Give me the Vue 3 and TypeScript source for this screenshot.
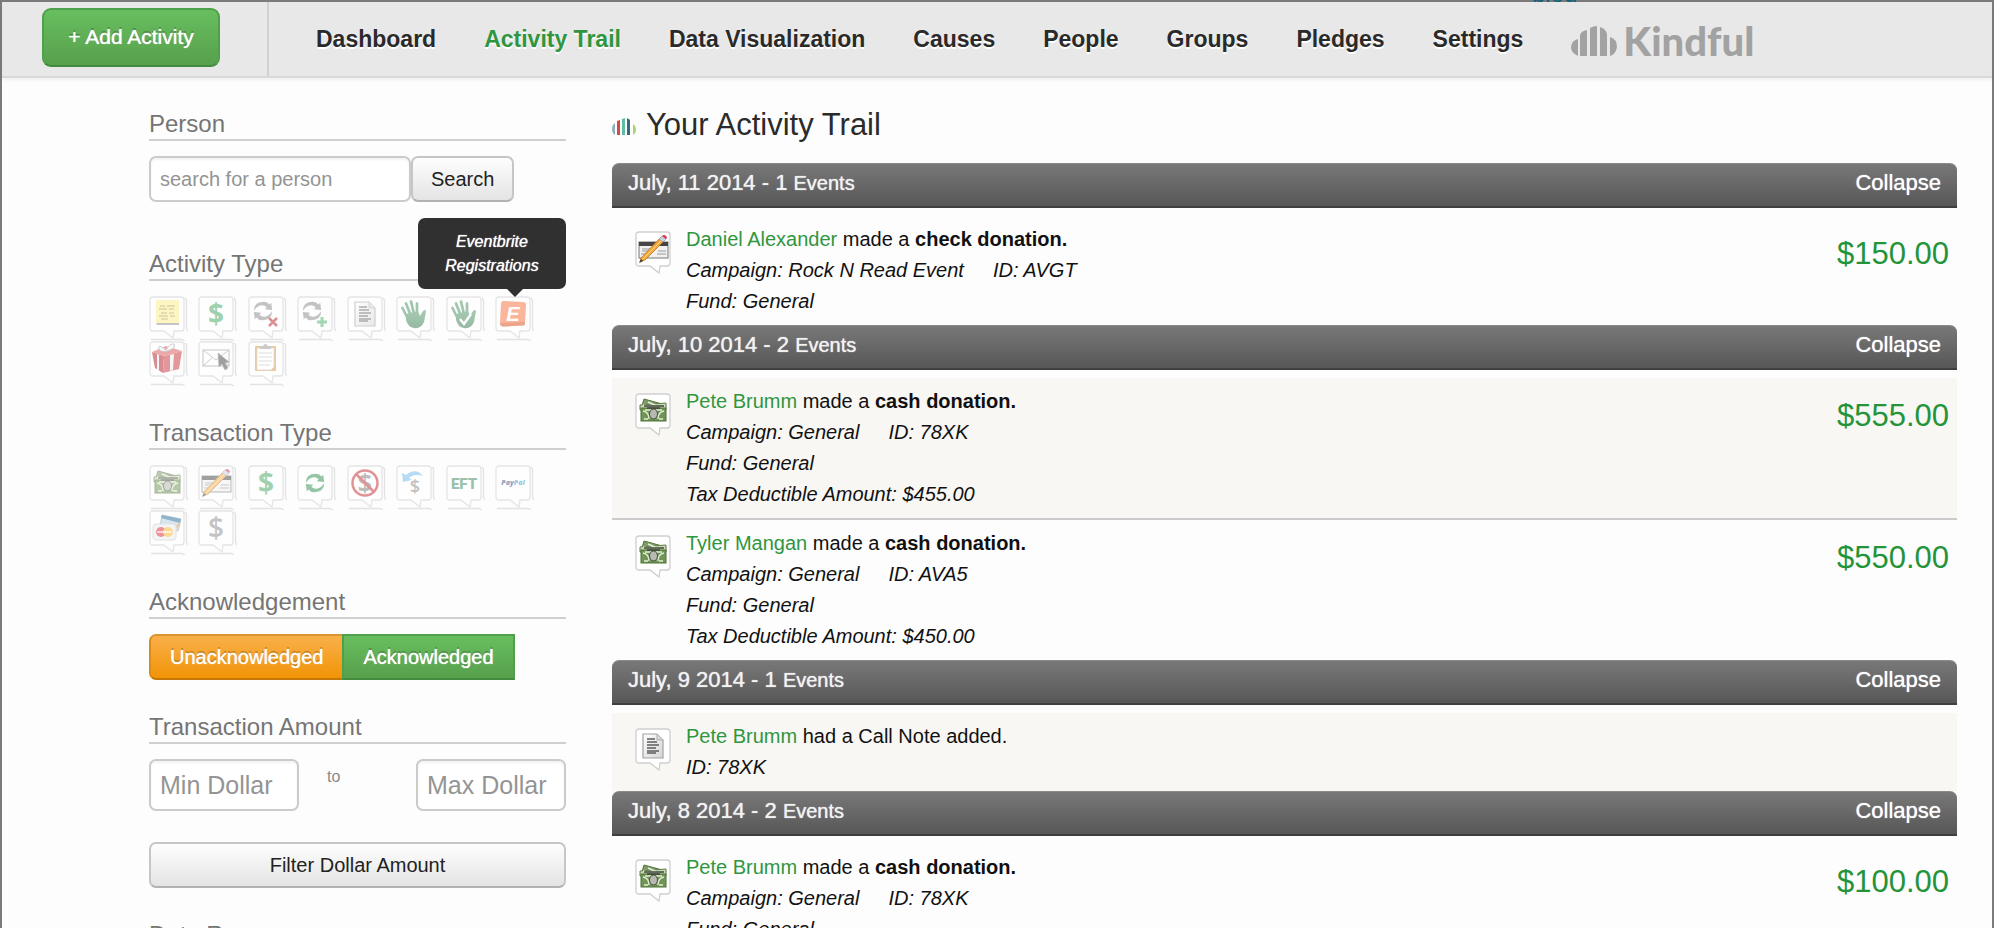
<script setup lang="ts">
import { ref } from 'vue'

interface TrailEvent {
  icon: string
  person: string
  verb: string
  what?: string
  campaign?: string
  id: string
  details: string[]
  amount?: string
  shaded: boolean
}
interface Day {
  date: string
  count: number
  events: TrailEvent[]
}

const nav = ['Dashboard', 'Activity Trail', 'Data Visualization', 'Causes', 'People', 'Groups', 'Pledges', 'Settings']
const active = ref('Activity Trail')

const activityTypes = [
  { icon: 'note', label: 'Notes' },
  { icon: 'dollar', label: 'Donations' },
  { icon: 'recur-stop', label: 'Recurring Stopped' },
  { icon: 'recur-add', label: 'Recurring Added' },
  { icon: 'doc', label: 'Call Notes' },
  { icon: 'hand', label: 'Volunteers' },
  { icon: 'hand-check', label: 'Volunteer Hours' },
  { icon: 'eventbrite', label: 'Eventbrite Registrations' },
  { icon: 'gift', label: 'Gifts' },
  { icon: 'mail', label: 'Email Clicks' },
  { icon: 'clipboard', label: 'Tasks' },
]
const transactionTypes = [
  { icon: 'cash', label: 'Cash' },
  { icon: 'check', label: 'Check' },
  { icon: 'dollar', label: 'Donation' },
  { icon: 'recur', label: 'Recurring' },
  { icon: 'no-dollar', label: 'Failed' },
  { icon: 'refund', label: 'Refund' },
  { icon: 'eft', label: 'EFT' },
  { icon: 'paypal', label: 'PayPal' },
  { icon: 'cards', label: 'Credit Card' },
  { icon: 'dollar-gray', label: 'Other' },
]

const days: Day[] = [
  {
    date: 'July, 11 2014',
    count: 1,
    events: [
      { icon: 'check', person: 'Daniel Alexander', verb: 'made a', what: 'check donation.', campaign: 'Rock N Read Event', id: 'AVGT', details: ['Fund: General'], amount: '$150.00', shaded: false },
    ],
  },
  {
    date: 'July, 10 2014',
    count: 2,
    events: [
      { icon: 'cash', person: 'Pete Brumm', verb: 'made a', what: 'cash donation.', campaign: 'General', id: '78XK', details: ['Fund: General', 'Tax Deductible Amount: $455.00'], amount: '$555.00', shaded: true },
      { icon: 'cash', person: 'Tyler Mangan', verb: 'made a', what: 'cash donation.', campaign: 'General', id: 'AVA5', details: ['Fund: General', 'Tax Deductible Amount: $450.00'], amount: '$550.00', shaded: false },
    ],
  },
  {
    date: 'July, 9 2014',
    count: 1,
    events: [
      { icon: 'doc', person: 'Pete Brumm', verb: 'had a Call Note added.', id: '78XK', details: [], shaded: true },
    ],
  },
  {
    date: 'July, 8 2014',
    count: 2,
    events: [
      { icon: 'cash', person: 'Pete Brumm', verb: 'made a', what: 'cash donation.', campaign: 'General', id: '78XK', details: ['Fund: General'], amount: '$100.00', shaded: false },
    ],
  },
]

const closed = ref<string[]>([])
function toggle(date: string) {
  closed.value = closed.value.includes(date) ? closed.value.filter((d) => d !== date) : [...closed.value, date]
}
</script>

<template>
  <div class="page">
    <svg class="defs" aria-hidden="true">
      <defs>
        <linearGradient id="g-hand" x1="0" y1="0" x2="0" y2="1">
          <stop offset="0" stop-color="#4f9a68" /><stop offset="1" stop-color="#33744a" />
        </linearGradient>
        <linearGradient id="g-page" x1="0" y1="0" x2="1" y2="1">
          <stop offset="0" stop-color="#ffffff" /><stop offset="1" stop-color="#d5d5d5" />
        </linearGradient>
        <symbol id="bubble" viewBox="0 0 39 45">
          <path d="M4 1H32Q35 1 35 4V32Q35 35 32 35H25L24 42L15 35H4Q1 35 1 32V4Q1 1 4 1Z" fill="#fff" stroke="#cfcfcf" stroke-width="1.3" />
        </symbol>
        <symbol id="sprite-edge" viewBox="0 0 39 45">
          <path d="M36 2L37.500 4V32L38.500 35M2 43.500H33L36 45" fill="none" stroke="#cacaca" stroke-width="1.300" />
        </symbol>
        <symbol id="note" viewBox="0 0 39 45">
          <path d="M7 27L30 27V29H8Z" fill="#8d8d8d" />
          <rect x="7" y="4" width="23" height="23" fill="#fdf08a" />
          <path d="M11 10h5M18 10h8M10 13h8M20 13h5M12 17h6M20 17h5M10 20h9M21 20h5M12 23h7" stroke="#c0ae5c" stroke-width="1.300" />
        </symbol>
        <symbol id="dollar" viewBox="0 0 39 45">
          <text x="18" y="28" text-anchor="middle" font-family="Open Sans, sans-serif" font-size="28" font-weight="700" fill="#45a764">$</text>
        </symbol>
        <symbol id="dollar-gray" viewBox="0 0 39 45">
          <text x="18" y="28" text-anchor="middle" font-family="Open Sans, sans-serif" font-size="28" font-weight="600" fill="#8c8c8c">$</text>
        </symbol>
        <symbol id="arrows" viewBox="0 0 24 24">
          <path d="M2 12Q2 2 13 2Q17 2 19 5L21 3L22 11L14 10L16 8Q13 5 9 6Q5 7 2 12Z" />
          <path d="M22 12Q22 22 11 22Q7 22 5 19L3 21L2 13L10 14L8 16Q11 19 15 18Q19 17 22 12Z" />
        </symbol>
        <symbol id="recur-stop" viewBox="0 0 39 45">
          <use href="#arrows" x="4" y="4" width="22" height="22" fill="#8b8b8b" />
          <path d="M21 22L29 30M29 22L21 30" stroke="#c0222c" stroke-width="2.500" />
        </symbol>
        <symbol id="recur-add" viewBox="0 0 39 45">
          <use href="#arrows" x="4" y="4" width="22" height="22" fill="#8b8b8b" />
          <path d="M25 21V31M20 26H30" stroke="#4cb368" stroke-width="3" />
        </symbol>
        <symbol id="recur" viewBox="0 0 39 45">
          <use href="#arrows" x="7" y="7" width="22" height="22" fill="#2e8f50" />
        </symbol>
        <symbol id="doc" viewBox="0 0 39 45">
          <path d="M8 6H22L28 12V30H8Z" fill="url(#g-page)" stroke="#a2a2a2" stroke-width="1.200" />
          <path d="M22 6V12H28" fill="#d8d8d8" stroke="#adadad" />
          <path d="M12 11h8M12 14h10M12 17h12M12 20h9M12 23h12M12 25h9" stroke="#5c5c5c" stroke-width="1.300" />
        </symbol>
        <symbol id="hand" viewBox="0 0 39 45">
          <path d="M12 23L6.500 12M15 20L10 7.500M18 18L15 5.500M21 18L21 7.500" stroke="#46905f" stroke-width="2.700" stroke-linecap="round" fill="none" />
          <path d="M10 18L22 15L24 20L27 15Q29 13 30 15L28 26Q25 33 18 32Q12 31 10 24Z" fill="url(#g-hand)" />
        </symbol>
        <symbol id="hand-check" viewBox="0 0 39 45">
          <use href="#hand" />
          <path d="M14 23L18 28L25 18" fill="none" stroke="#fff" stroke-width="2.500" />
        </symbol>
        <symbol id="eventbrite" viewBox="0 0 39 45">
          <path d="M9 5L28 6Q31 6 31 9L30 27Q30 30 27 29.500L8 30.500Q5 30 5 27L6 8Q6 5 9 5Z" fill="#f96f3a" />
          <path d="M6 27L30 26V27Q30 30 27 29.500L8 30.500Q5 30 5 27Z" fill="#d94f1d" />
          <text x="18" y="25" text-anchor="middle" font-family="Liberation Sans, sans-serif" font-size="20" font-weight="700" font-style="italic" fill="#fff">E</text>
        </symbol>
        <symbol id="gift" viewBox="0 0 39 45">
          <path d="M3 11L15 15L14 32L6 27Z" fill="#b01d25" />
          <path d="M15 15L33 10L30 28L14 32Z" fill="#c9343b" />
          <path d="M3 11L17 5L33 10L15 15Z" fill="#dc5358" />
          <path d="M8 13L10 14V30L8 29ZM21 14L25 13L24 29L21 30Z" fill="#efefef" />
          <path d="M17 9Q8 2 10 8Q11 11 18 10Q28 7 25 3Q21 2 17 9Z" fill="#f7f7f7" stroke="#a0a0a0" />
        </symbol>
        <symbol id="mail" viewBox="0 0 39 45">
          <rect x="5" y="9" width="26" height="16" fill="#fff" stroke="#8e8e8e" />
          <path d="M5 9L18 19L31 9M5 25L14 17M31 25L22 17" fill="none" stroke="#9a9a9a" />
          <path d="M20 12L21 26L24 23L27 29L30 27L27 22L31 21Z" fill="#444" stroke="#777" stroke-width=".7" />
        </symbol>
        <symbol id="clipboard" viewBox="0 0 39 45">
          <rect x="7" y="5" width="21" height="25" rx="1" fill="#dc9a3b" />
          <path d="M9 7H26V26L23 29H9Z" fill="#fff" stroke="#b9b9b9" stroke-width=".7" />
          <path d="M12 8V5H15Q17 1 20 5H23V8Z" fill="#999" />
          <path d="M11 12h13M11 16h13M11 20h13M11 24h11" stroke="#bdbdbd" />
        </symbol>
        <symbol id="cash" viewBox="0 0 39 45">
          <path d="M9 6L31 12L28 21L6 16Z" fill="#7e9c67" stroke="#56753f" />
          <path d="M5 12L31 10V17H5Z" fill="#ccd8b8" stroke="#5e7f47" />
          <path d="M13 9L22 13M8 12L15 14" stroke="#e7eedb" stroke-width="1.500" />
          <rect x="6" y="15" width="25" height="13" fill="#6f9655" stroke="#4f7338" />
          <path d="M8 18Q14 19 14 26M29 18Q23 19 23 26M9 26H13M24 26H28M10 17H27" fill="none" stroke="#e3ecd6" stroke-width="1.300" />
          <ellipse cx="18.500" cy="21" rx="4" ry="5" fill="#b7b9b2" stroke="#48503f" />
          <path d="M9 13H29M12 15H25" stroke="#3e4539" stroke-width="1.700" />
        </symbol>
        <symbol id="check" viewBox="0 0 39 45">
          <rect x="4" y="11" width="29" height="16" fill="#f0f0f0" stroke="#777" />
          <rect x="4" y="11" width="29" height="4" fill="#454545" />
          <path d="M7 18h13M7 20h10M23 20h8M6 23h9M22 23h9" stroke="#9b9b9b" />
          <path d="M6 27L26 6L30 9L10 29L5 31Z" fill="#f6a93b" stroke="#b87322" stroke-width=".8" />
          <path d="M8 28L28 8" stroke="#ffd88e" />
          <path d="M24 8L27 5L31 8L28 11Z" fill="#c9d3df" stroke="#8999ac" stroke-width=".6" />
          <path d="M27 5Q29 3 31 5Q33 7 31 8Z" fill="#d8344a" />
          <path d="M4 32L6 28L8 30Z" fill="#3d3d3d" />
        </symbol>
        <symbol id="no-dollar" viewBox="0 0 39 45">
          <text x="18" y="27" text-anchor="middle" font-family="Open Sans, sans-serif" font-size="25" font-weight="700" fill="#7d7d7d">$</text>
          <circle cx="18" cy="18" r="12.500" fill="none" stroke="#c52a31" stroke-width="2.500" />
          <path d="M9 9L27 27" stroke="#c52a31" stroke-width="2.500" />
        </symbol>
        <symbol id="refund" viewBox="0 0 39 45">
          <path d="M6 8L7 17L16 15L13 13Q18 8 27 11Q20 2 10 10Z" fill="#70bdf0" />
          <text x="19" y="28" text-anchor="middle" font-family="Open Sans, sans-serif" font-size="18" font-weight="600" fill="#868686">$</text>
        </symbol>
        <symbol id="eft" viewBox="0 0 39 45">
          <text x="18" y="24" text-anchor="middle" font-family="Roboto, sans-serif" font-size="15" font-weight="900" fill="#3a8759">EFT</text>
        </symbol>
        <symbol id="paypal" viewBox="0 0 39 45">
          <text x="18" y="20" text-anchor="middle" font-family="Open Sans, sans-serif" font-size="7" font-weight="800" font-style="italic" fill="#1f4d86">Pay<tspan fill="#3098d3">Pal</tspan></text>
        </symbol>
        <symbol id="cards" viewBox="0 0 39 45">
          <path d="M13 5L32 9L29 21L11 17Z" fill="#b3cfe0" stroke="#839cab" />
          <path d="M13 5L32 9L31 13L12 8Z" fill="#246d9d" />
          <path d="M27 18L30 14" stroke="#df9832" stroke-width="2" />
          <rect x="4" y="14" width="23" height="16" rx="3" fill="#ececec" stroke="#c8c8c8" />
          <circle cx="12" cy="22" r="5" fill="#dc2a35" />
          <circle cx="19" cy="22" r="5" fill="#f6b62b" />
          <path d="M8 22H23" stroke="#fff" stroke-width="1.300" />
        </symbol>
      </defs>
    </svg>

    <div class="behind" aria-hidden="true"><span>blog</span></div>

    <header class="topbar">
      <div class="add-wrap">
        <button type="button" class="btn green add">+ Add Activity</button>
      </div>
      <nav class="nav">
        <a v-for="n in nav" :key="n" href="#" :class="{ on: n === active }" @click.prevent="active = n">{{ n }}</a>
        <a href="#" class="brand" aria-label="Kindful">
          <svg width="46" height="30" viewBox="0 0 46 30" fill="#a2a2a2" aria-hidden="true">
            <path d="M7 13V30Q0 27 0 21Q1 14 7 13Z" />
            <path d="M9 30V9Q10 5 16 4V30Z" />
            <path d="M19 30V2Q22 0 26 0V30Z" />
            <path d="M29 30V1Q35 3 36 8V30Z" />
            <path d="M39 30V11Q46 13 46 21Q45 28 39 30Z" />
          </svg>
          <span>Kindful</span>
        </a>
      </nav>
    </header>

    <div class="body">
      <aside class="side">
        <section class="person">
          <h2><label for="person">Person</label></h2>
          <form class="search" @submit.prevent>
            <input id="person" type="text" placeholder="search for a person" />
            <button type="submit" class="btn plain">Search</button>
          </form>
        </section>

        <section>
          <h2>Activity Type</h2>
          <div class="icons">
            <button v-for="t in activityTypes" :key="t.label" type="button" class="icon" :aria-label="t.label">
              <svg width="39" height="45" viewBox="0 0 39 45" aria-hidden="true">
                <use href="#bubble" /><use href="#sprite-edge" /><use :href="'#' + t.icon" />
              </svg>
              <span v-if="t.icon === 'eventbrite'" class="tip" role="tooltip">Eventbrite Registrations</span>
            </button>
          </div>
        </section>

        <section>
          <h2>Transaction Type</h2>
          <div class="icons">
            <button v-for="t in transactionTypes" :key="t.label" type="button" class="icon" :aria-label="t.label">
              <svg width="39" height="45" viewBox="0 0 39 45" aria-hidden="true">
                <use href="#bubble" /><use href="#sprite-edge" /><use :href="'#' + t.icon" />
              </svg>
            </button>
          </div>
        </section>

        <section>
          <h2>Acknowledgement</h2>
          <div class="pair">
            <button type="button" class="btn orange">Unacknowledged</button>
            <button type="button" class="btn green">Acknowledged</button>
          </div>
        </section>

        <section>
          <h2>Transaction Amount</h2>
          <div class="range">
            <input type="text" placeholder="Min Dollar" aria-label="Min Dollar" />
            <span>to</span>
            <input type="text" placeholder="Max Dollar" aria-label="Max Dollar" />
          </div>
          <button type="button" class="btn plain wide">Filter Dollar Amount</button>
        </section>

        <section>
          <h2>Date Range</h2>
        </section>
      </aside>

      <main class="main">
        <h1>
          <svg width="24" height="17" viewBox="0 0 24 17" aria-hidden="true">
            <path d="M3 5V17Q0 15 0 11Q0 7 3 5Z" fill="#8fb0c0" />
            <path d="M5 17V3L8 2V17Z" fill="#d5484c" />
            <path d="M10 17V1L13 0V17Z" fill="#5cbda3" />
            <path d="M15 17V0L18 2V17Z" fill="#3d6776" />
            <path d="M21 17V6Q24 8 24 12Q24 15 21 17Z" fill="#a9d46d" />
          </svg>
          Your Activity Trail
        </h1>

        <section v-for="d in days" :key="d.date" class="day">
          <div class="bar">
            <h3>{{ d.date }} - {{ d.count }} <small>Events</small></h3>
            <button type="button" @click="toggle(d.date)">{{ closed.includes(d.date) ? 'Expand' : 'Collapse' }}</button>
          </div>
          <template v-if="!closed.includes(d.date)">
            <article v-for="(e, i) in d.events" :key="i" class="row" :class="{ shaded: e.shaded }">
              <svg class="row-icon" width="39" height="45" viewBox="0 0 39 45" aria-hidden="true">
                <use href="#bubble" /><use :href="'#' + e.icon" />
              </svg>
              <div class="text">
                <p><a href="#">{{ e.person }}</a> {{ e.verb }} <b v-if="e.what">{{ e.what }}</b></p>
                <p class="meta"><span v-if="e.campaign">Campaign: {{ e.campaign }}</span><span>ID: {{ e.id }}</span></p>
                <p v-for="t in e.details" :key="t" class="meta">{{ t }}</p>
              </div>
              <div v-if="e.amount" class="amount">{{ e.amount }}</div>
            </article>
          </template>
        </section>
      </main>
    </div>
  </div>
</template>

<style>
html {
  scrollbar-width: none;
}
body {
  margin: 0;
}
</style>

<style scoped>
.page {
  box-sizing: border-box;
  min-height: 100vh;
  border: solid #7b7b7b;
  border-width: 0 2px;
  background: #fdfdfd;
  color: #111;
  font-family: "Liberation Sans", Arial, sans-serif;
  font-size: 20px;
}
.page * {
  box-sizing: border-box;
}
.defs {
  position: absolute;
  width: 0;
  height: 0;
}
button,
input {
  font-family: inherit;
  font-size: 20px;
  margin: 0;
}
button {
  cursor: pointer;
}
a {
  text-decoration: none;
}
h1,
h2,
h3,
p {
  margin: 0;
  font-weight: normal;
}

.behind {
  display: flex;
  align-items: flex-end;
  height: 2px;
  overflow: hidden;
  background: #7b7b7b;
  padding-left: 1530px;
}
.behind span {
  color: #14607a;
  font-size: 24px;
  line-height: 16px;
}

.topbar {
  display: flex;
  height: 76px;
  background: #e8e8e8;
  border-bottom: 2px solid #d9d9d9;
  box-shadow: 0 2px 4px rgba(0, 0, 0, 0.06);
}
.add-wrap {
  display: flex;
  align-items: flex-start;
  width: 267px;
  padding: 6px 0 0 40px;
  border-right: 2px solid #d2d2d2;
}
.nav {
  display: flex;
  align-items: center;
  gap: 48px;
  padding-left: 47px;
}
.nav a {
  color: #2a2a2a;
  font-size: 23px;
  line-height: 30px;
  font-weight: bold;
  white-space: nowrap;
  text-shadow: 0 2px 0 #fff;
}
.nav a.on {
  color: #2f963f;
}
.nav .brand {
  display: flex;
  align-items: center;
  gap: 6px;
  padding-top: 4px;
  color: #a2a2a2;
  font-family: Lato, sans-serif;
  font-size: 40px;
  font-weight: 900;
  text-shadow: none;
}

.btn {
  height: 46px;
  padding: 0 18px;
  border: 2px solid #c4c4c4;
  border-radius: 7px;
  text-align: center;
  white-space: nowrap;
}
.plain {
  color: #222;
  border-color: #c6c6c6 #c6c6c6 #b2b2b2;
  background: linear-gradient(#fefefe, #e4e4e4);
}
.green,
.orange {
  padding: 0 19px;
  color: #fff;
  text-shadow: 0 0 1px #fff, 0 -2px 0 rgba(0, 0, 0, 0.22);
}
.green {
  border-color: #4fa04a #4fa04a #438a3f;
  background: linear-gradient(#68be5e, #57a04d);
}
.orange {
  border-color: #db952f #db8c14 #c57805;
  background: linear-gradient(#f9b04a, #f19407);
}
.add {
  width: 178px;
  height: 59px;
  padding: 0 0 1px;
  border-radius: 9px;
  font-size: 21px;
}

.body {
  display: flex;
  align-items: flex-start;
  gap: 46px;
  padding: 26px 35px 40px 147px;
}
.side {
  flex: none;
  width: 417px;
  padding-top: 5px;
}
.side section {
  margin-bottom: 32px;
}
.side .person {
  margin-bottom: 47px;
}
.side h2 {
  margin-bottom: 15px;
  border-bottom: 2px solid #cfcfcf;
  color: #757575;
  font-size: 24px;
  line-height: 30px;
}
.search {
  display: flex;
}
input {
  border: 2px solid #cbcbcb;
  border-radius: 7px;
  background: #fff;
  color: #333;
  box-shadow: inset 0 2px 2px rgba(0, 0, 0, 0.05);
}
input::placeholder {
  color: #949494;
  opacity: 1;
}
.search input {
  width: 262px;
  height: 46px;
  padding: 0 9px;
}

.icons {
  display: grid;
  grid-template-columns: repeat(8, 39px);
  justify-content: space-between;
  margin-right: 32px;
}
.icon {
  position: relative;
  width: 39px;
  height: 45px;
  padding: 0;
  border: 0;
  background: none;
}
.icon svg {
  display: block;
  opacity: 0.5;
}
.tip {
  position: absolute;
  bottom: 52px;
  right: -32px;
  width: 148px;
  padding: 12px 20px 11px;
  border-radius: 7px;
  background: #303030;
  color: #fff;
  font-size: 16px;
  line-height: 24px;
  font-style: italic;
  text-align: center;
  text-shadow: 0 0 1px #fff;
}
.tip::after {
  content: "";
  position: absolute;
  top: 100%;
  right: 43px;
  border: 8px solid transparent;
  border-top-color: #303030;
  border-bottom-width: 0;
}

.pair {
  display: flex;
}
.pair .orange {
  border-right: 0;
  border-radius: 7px 0 0 7px;
}
.pair .green {
  border-radius: 0;
}
.range {
  display: flex;
  justify-content: space-between;
  margin-bottom: 31px;
}
.range input {
  width: 150px;
  height: 52px;
  padding: 0 9px;
  font-size: 25px;
}
.range span {
  flex: 1;
  padding: 8px 0 0 28px;
  color: #8a8a8a;
  font-size: 16px;
  line-height: 20px;
}
.wide {
  display: block;
  width: 100%;
}

.main {
  flex: 1;
  min-width: 0;
}
h1 {
  display: flex;
  align-items: baseline;
  gap: 10px;
  padding-top: 1px;
  margin-bottom: 18px;
  color: #2b2b2b;
  font-size: 31px;
  line-height: 40px;
}
.bar {
  display: flex;
  justify-content: space-between;
  height: 45px;
  margin-bottom: 8px;
  padding: 4px 16px 0;
  border-top: 1px solid #8a8a8a;
  border-bottom: 2px solid #3f3f3f;
  border-radius: 7px 7px 0 0;
  background: linear-gradient(#787878, #575757);
}
.bar h3,
.bar button {
  color: #f2f2f2;
  font-size: 22px;
  line-height: 30px;
  text-shadow: 0 0 1px #f2f2f2;
}
.bar small {
  font-size: 20px;
}
.bar button {
  height: 30px;
  padding: 0;
  border: 0;
  background: none;
  color: #fff;
}
.row {
  display: flex;
  align-items: flex-start;
  padding: 8px 8px 8px 23px;
}
.row + .row {
  border-top: 2px solid #cbcbcb;
}
.shaded {
  background: #f9f7f3;
}
.row-icon {
  flex: none;
  margin: 7px 12px 0 0;
}
.text {
  flex: 1;
  line-height: 31px;
}
.text a {
  color: #2f963f;
}
.meta {
  font-style: italic;
}
.meta span + span {
  margin-left: 29px;
}
.amount {
  padding-top: 12px;
  color: #24943a;
  font-size: 31px;
  line-height: 36px;
}
</style>
